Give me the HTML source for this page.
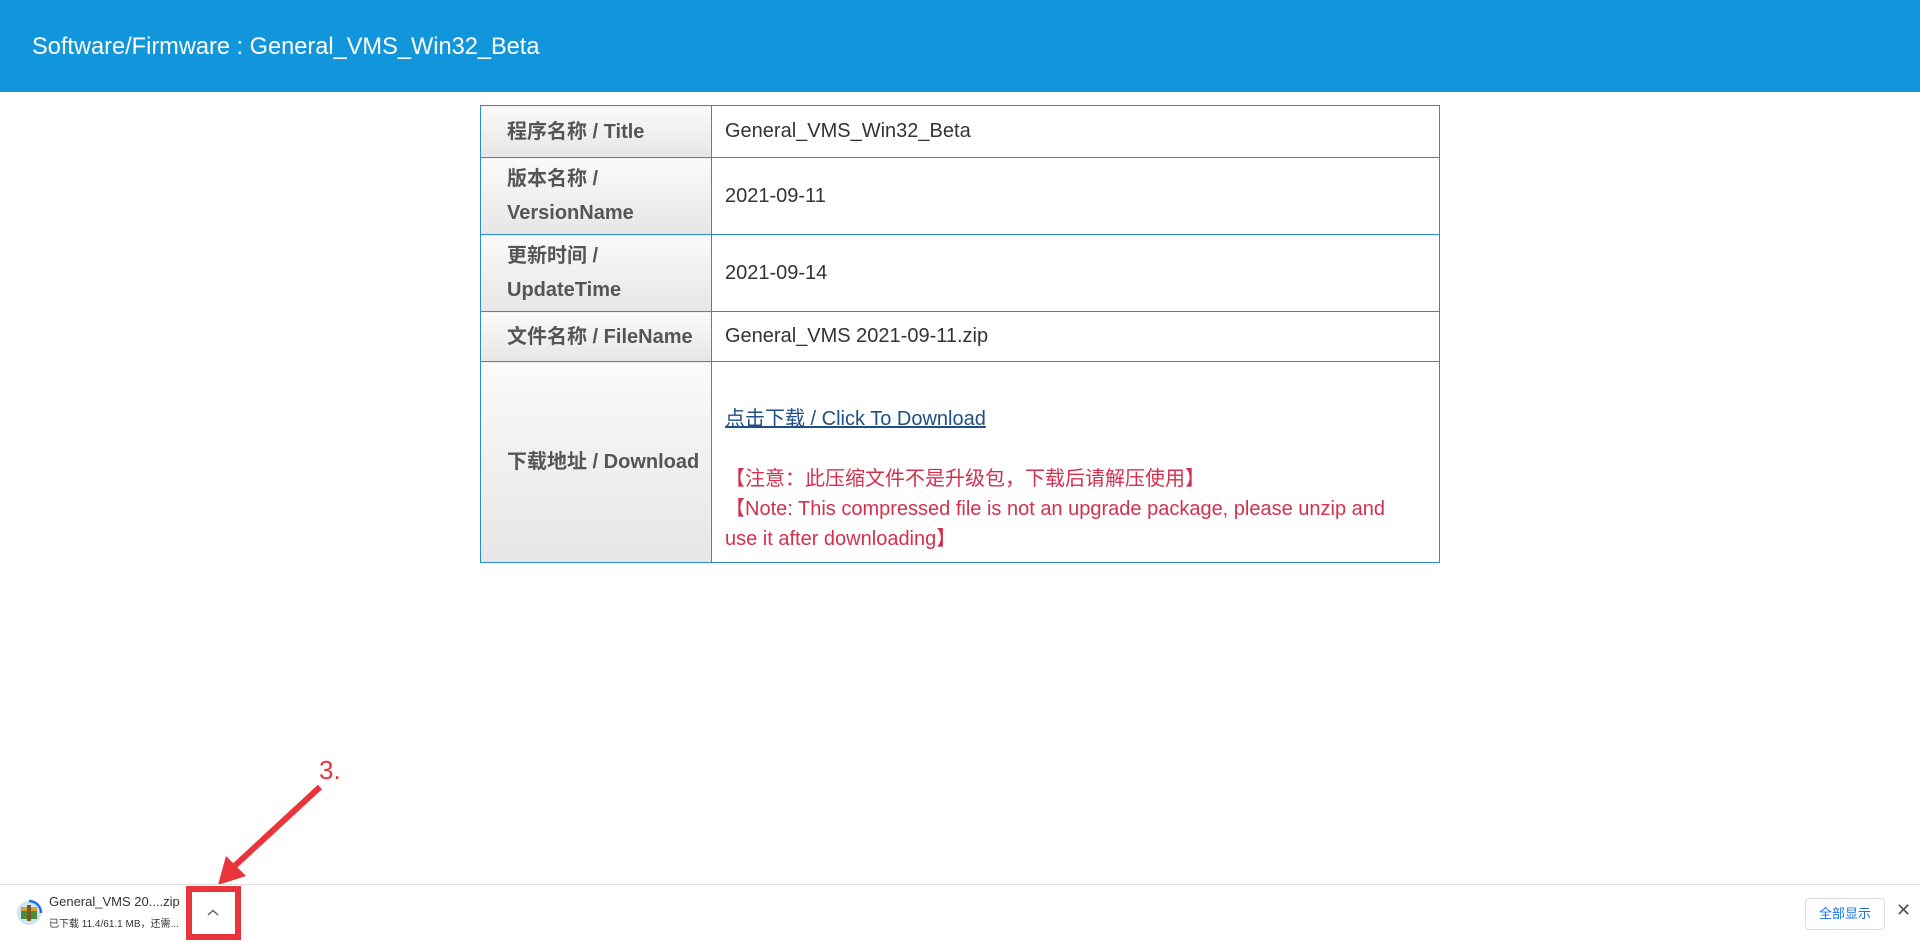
<!DOCTYPE html>
<html><head><meta charset="utf-8"><style>
body{margin:0;width:1920px;height:941px;position:relative;overflow:hidden;background:#fff;font-family:"Liberation Sans","Noto Sans CJK SC",sans-serif;}
.hd{position:absolute;left:0;top:0;width:1920px;height:92px;background:#1196dc;color:#fff;font-size:23.6px;line-height:94px;padding-left:32px;box-sizing:border-box;}
table{position:absolute;left:480px;top:105px;width:960px;border-collapse:collapse;}
td{border:1.5px solid #2a8fc9;font-size:20px;color:#333;padding:0 0 0 13px;}
td.l{width:204px;padding-left:26px;font-weight:bold;color:#555;background:linear-gradient(#fafafa,#e6e6e6);line-height:34px;}
a{color:#1f4f86;text-decoration:underline;}
.red{color:#d3304e;line-height:30px;}
.bar{position:absolute;left:0;top:884px;width:1920px;height:57px;border-top:1px solid #ddd;}
</style></head><body>
<div class="hd">Software/Firmware : General_VMS_Win32_Beta</div>
<table>
<tr style="height:52px"><td class="l">程序名称 / Title</td><td>General_VMS_Win32_Beta</td></tr>
<tr style="height:77px"><td class="l">版本名称 /<br>VersionName</td><td>2021-09-11</td></tr>
<tr style="height:77px"><td class="l">更新时间 /<br>UpdateTime</td><td>2021-09-14</td></tr>
<tr style="height:50px"><td class="l">文件名称 / FileName</td><td>General_VMS 2021-09-11.zip</td></tr>
<tr style="height:201px"><td class="l">下载地址 / Download</td><td style="padding-top:40px;vertical-align:top;height:201px;box-sizing:border-box"><a>点击下载 / Click To Download</a><div style="height:33px"></div><div class="red">【注意：此压缩文件不是升级包，下载后请解压使用】<br>【Note: This compressed file is not an upgrade package, please unzip and<br>use it after downloading】</div></td></tr>
</table>
<div style="position:absolute;left:319px;top:755px;color:#e8343a;font-size:26px">3.</div>
<svg style="position:absolute;left:0;top:0" width="400" height="941"><line x1="320" y1="787" x2="228" y2="872" stroke="#e8343a" stroke-width="6"/><polygon points="218,885 226,856 246,876" fill="#e8343a"/></svg>
<div class="bar">
<svg style="position:absolute;left:15px;top:14px" width="28" height="28"><circle cx="14" cy="14" r="12" fill="#cfe3f3"/><rect x="6" y="10" width="16" height="10" fill="#4a8c3a"/><rect x="6" y="8" width="16" height="4" fill="#d9a030"/><rect x="12" y="6" width="4" height="16" fill="#7a5a20"/><path d="M14 2 A12 12 0 0 1 26 14" stroke="#1a73e8" stroke-width="2.5" fill="none"/></svg>
<div style="position:absolute;left:49px;top:9px;font-size:13px;color:#333">General_VMS 20....zip</div>
<div style="position:absolute;left:49px;top:30px;font-size:10px;color:#333">已下载 11.4/61.1 MB，还需...</div>
<div style="position:absolute;left:186px;top:1px;width:43px;height:42px;border:6px solid #e8343a;"></div>
<svg style="position:absolute;left:207px;top:24px" width="12" height="8"><path d="M1 6 L6 1.5 L11 6" stroke="#666" stroke-width="1.5" fill="none"/></svg>
<div style="position:absolute;left:1805px;top:13px;width:78px;height:30px;border:1px solid #ddd;border-radius:4px;text-align:center;line-height:30px;font-size:13px;color:#1a73e8">全部显示</div>
<div style="position:absolute;left:1896px;top:15px;font-size:18px;color:#555">✕</div>
</div>
</body></html>
